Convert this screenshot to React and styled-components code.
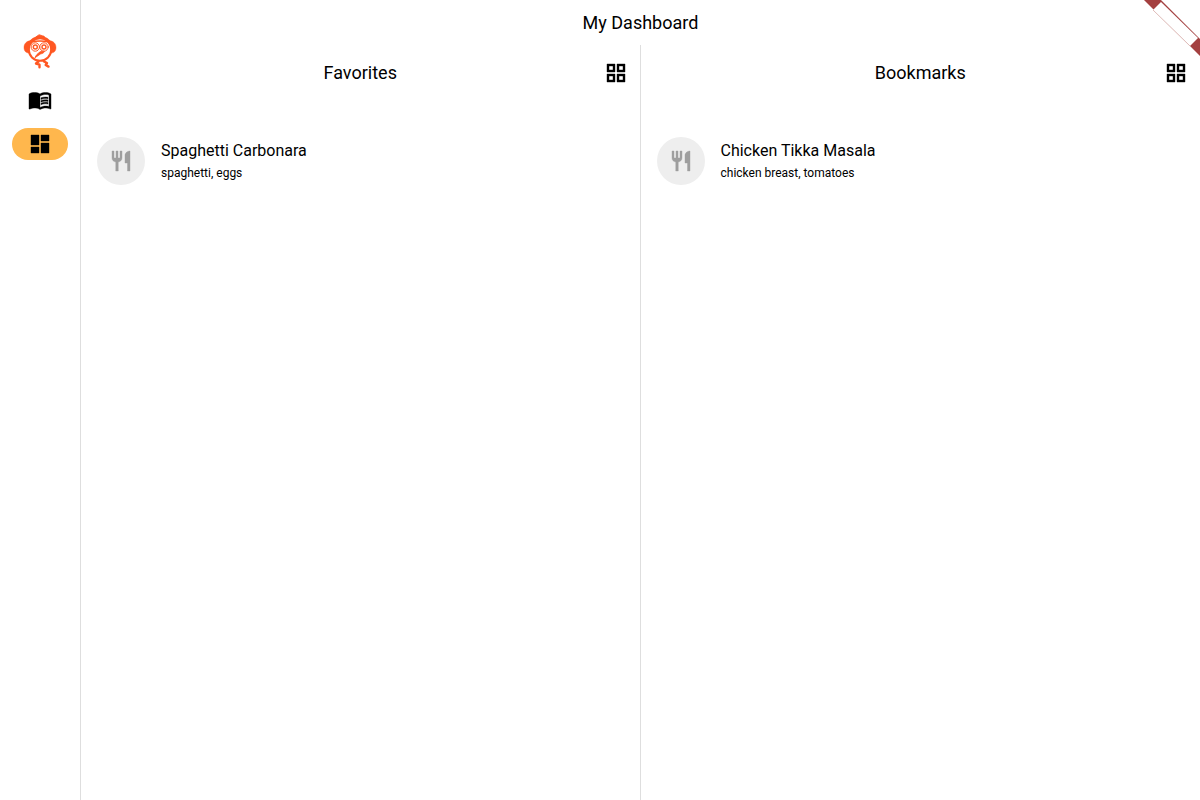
import React from "react";
import styled, { createGlobalStyle } from "styled-components";
import { MdMenuBook, MdDashboard, MdOutlineGridView, MdRestaurant } from "react-icons/md";

const GlobalStyle = createGlobalStyle`
  * { box-sizing: border-box; }
  body { margin: 0; background: #fff; color: #000; font-family: Roboto, sans-serif; }
  svg path[fill="none"] { stroke: none; }
`;

const Page = styled.div`
  position: relative;
  display: flex;
  min-height: 100vh;
  overflow: hidden;
`;

const Rail = styled.nav`
  flex: none;
  width: 81px;
  padding: 32px 12px 0;
  border-right: 1px solid #dedede;
  display: flex;
  flex-direction: column;
  align-items: center;
  gap: 12px;
`;

const Logo = styled.svg`
  width: 40px;
  height: 40px;
`;

const RailLink = styled.a`
  display: flex;
  align-items: center;
  justify-content: center;
  width: 56px;
  height: 32px;
  border-radius: 16px;
  color: #000;
  background: ${(p) => (p.$active ? "#ffb74d" : "transparent")};
`;

const Main = styled.main`
  flex: 1;
  min-width: 0;
  display: flex;
  flex-direction: column;
`;

const PageTitle = styled.h1`
  margin: 0;
  font-size: 18px;
  line-height: 45px;
  font-weight: 400;
  text-align: center;
`;

const Columns = styled.div`
  flex: 1;
  display: grid;
  grid-template-columns: 1fr 1fr;
`;

const Panel = styled.section`
  min-width: 0;
  &:not(:last-child) { border-right: 1px solid #dedede; }
`;

const PanelHeader = styled.header`
  display: grid;
  grid-template-columns: 48px 1fr 48px;
  align-items: center;
  height: 56px;
`;

const PanelTitle = styled.h2`
  grid-column: 2;
  margin: 0;
  font-size: 18px;
  line-height: 24px;
  font-weight: 400;
  text-align: center;
`;

const ViewButton = styled.button`
  display: flex;
  align-items: center;
  justify-content: center;
  width: 48px;
  height: 48px;
  padding: 0;
  border: 0;
  border-radius: 50%;
  background: transparent;
  color: #000;
  cursor: pointer;
`;

const RecipeList = styled.ul`
  list-style: none;
  margin: 0;
  padding: 24px 16px;
`;

const Recipe = styled.li`
  display: flex;
  align-items: center;
  gap: 16px;
  height: 72px;
`;

const Avatar = styled.span`
  flex: none;
  display: flex;
  align-items: center;
  justify-content: center;
  width: 48px;
  height: 48px;
  border-radius: 50%;
  background: #eee;
  color: #9e9e9e;
`;

const RecipeName = styled.div`
  font-size: 16px;
  line-height: 24px;
`;

const Ingredients = styled.div`
  font-size: 12px;
  line-height: 20px;
`;

const Ribbon = styled.svg`
  position: absolute;
  top: 0;
  right: 0;
  width: 56px;
  height: 56px;
  pointer-events: none;
`;

const panels = [
  { title: "Favorites", recipes: [{ name: "Spaghetti Carbonara", ingredients: "spaghetti, eggs" }] },
  { title: "Bookmarks", recipes: [{ name: "Chicken Tikka Masala", ingredients: "chicken breast, tomatoes" }] },
];

function BirdLogo() {
  return (
    <Logo viewBox="0 0 40 40" role="img" aria-label="Home" fill="none" stroke="#ff5722" strokeLinecap="round" strokeLinejoin="round">
      <circle cx="20" cy="17.500" r="11.300" fill="#fff" strokeWidth="2" />
      <path d="M9 12C11 7.500 14.500 5 20 5S29 7.500 31 12" strokeWidth="2" />
      <path d="M16 5c1-1.500 2-1 3-2.300 1 .8 3 .3 3 1.300 1.500-.3 2.500.2 2.500 1.200" fill="#ff5722" strokeWidth="1" />
      <path d="M11 10Q20 8 29 10" strokeWidth="1.500" />
      <path d="M11 8.500C6 9 4 12 4 15.500c0 3.500 2 5.800 6 5.500-.8-3-.8-6 1-9.500ZM29 8.500c5 .5 7 3.500 7 7 0 3.500-2 5.800-6 5.500.8-3 .8-6-1-9.500Z" fill="#ff5722" strokeWidth=".4" />
      <circle cx="15.300" cy="15" r="4.200" fill="#fff" strokeWidth="1" />
      <circle cx="24" cy="15" r="4.200" fill="#fff" strokeWidth="1" />
      <circle cx="15.300" cy="15" r="2" strokeWidth="1.400" />
      <circle cx="24" cy="15" r="2" strokeWidth="1.400" />
      <path d="M20 20c1.500-1 3-1 4.500-.5-.5 1.300-2 2-4 2.500L15 25.700c.8-2.200 2.500-4.200 5-5.700Z" fill="#ff5722" strokeWidth=".8" />
      <path d="M18.500 29.500l-2.500 2 3.500 1.200v2.500M24 29.500l3 1.500-1.300 2 2.800 1.600" strokeWidth="2.400" />
    </Logo>
  );
}

export default function App() {
  return (
    <Page>
      <GlobalStyle />
      <Rail aria-label="Main">
        <BirdLogo />
        <RailLink href="#recipes" aria-label="Recipes"><MdMenuBook size={24} strokeWidth={0.4} /></RailLink>
        <RailLink href="#dashboard" aria-label="Dashboard" aria-current="page" $active><MdDashboard size={24} strokeWidth={0.4} /></RailLink>
      </Rail>
      <Main>
        <PageTitle>My Dashboard</PageTitle>
        <Columns>
          {panels.map((panel) => (
            <Panel key={panel.title}>
              <PanelHeader>
                <PanelTitle>{panel.title}</PanelTitle>
                <ViewButton type="button" aria-label={`Show ${panel.title} as grid`}><MdOutlineGridView size={24} strokeWidth={0.4} /></ViewButton>
              </PanelHeader>
              <RecipeList>
                {panel.recipes.map((recipe) => (
                  <Recipe key={recipe.name}>
                    <Avatar><MdRestaurant size={24} strokeWidth={0.4} /></Avatar>
                    <div>
                      <RecipeName>{recipe.name}</RecipeName>
                      <Ingredients>{recipe.ingredients}</Ingredients>
                    </div>
                  </Recipe>
                ))}
              </RecipeList>
            </Panel>
          ))}
        </Columns>
      </Main>
      <Ribbon viewBox="0 0 56 56" aria-hidden="true">
        <path d="M0 0H17L56 39V56Z" fill="#a44040" />
        <path d="M9 10L17 2L54 38L46 46Z" fill="#fff" />
        <path d="M9 10L46 46" stroke="#dfbcb9" strokeWidth="1" />
      </Ribbon>
    </Page>
  );
}
